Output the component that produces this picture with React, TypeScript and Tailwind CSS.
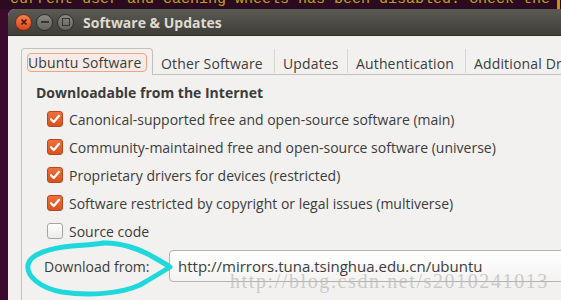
import React from "react";

const ui = { fontFamily: '"Open Sans", "Noto Sans", sans-serif' };

function Check({ on }: { on: boolean }) {
  if (!on) {
    return (
      <span className="w-[16px] h-[16px] rounded-[3px] border border-[#a8a6a2] bg-gradient-to-b from-[#ffffff] to-[#ecebe9] shrink-0" />
    );
  }
  return (
    <span className="w-[16px] h-[16px] rounded-[3px] border border-[#b9461b] bg-gradient-to-b from-[#f0703c] to-[#d9521d] flex items-center justify-center shrink-0">
      <svg width="12" height="12" viewBox="0 0 12 12">
        <path d="M2 6.2 L4.8 9 L10 2.8" fill="none" stroke="#ffffff" strokeWidth="2.2" strokeLinecap="round" strokeLinejoin="round" />
      </svg>
    </span>
  );
}

const sources = [
  { label: "Canonical-supported free and open-source software (main)", on: true },
  { label: "Community-maintained free and open-source software (universe)", on: true },
  { label: "Proprietary drivers for devices (restricted)", on: true },
  { label: "Software restricted by copyright or legal issues (multiverse)", on: true },
  { label: "Source code", on: false },
];

export default function App() {
  return (
    <div className="relative w-[561px] h-[300px] overflow-hidden bg-[#3a0b2c]">
      {/* terminal behind the window */}
      <div className="h-[9px] overflow-hidden bg-[#2c0a20] pl-[10px] flex">
        <div
          className="text-[15px] leading-[15px] mt-[-8px] text-[#c2a014] whitespace-pre"
          style={{ fontFamily: '"Liberation Mono", monospace' }}
        >
          current user and caching wheels has been disabled. Check the
        </div>
        <span className="ml-auto mr-[1px] w-[3px] h-[9px] bg-[#d08a10]" />
      </div>

      {/* window */}
      <div className="ml-[8px] h-[291px] rounded-tl-[7px] overflow-hidden bg-[#f2f1f0] flex flex-col" style={ui}>
        {/* title bar */}
        <div className="h-[27px] shrink-0 bg-gradient-to-b from-[#5c5a54] to-[#3e3d39] flex items-center pl-[7px] border-b border-[#2f2e2b]">
          <div className="flex items-center gap-[3px]">
            <span className="w-[17px] h-[17px] rounded-full border border-[#7a2a0c] bg-gradient-to-b from-[#f4804e] to-[#d9461a] flex items-center justify-center">
              <svg width="8" height="8" viewBox="0 0 8 8">
                <path d="M1.5 1.5 L6.5 6.5 M6.5 1.5 L1.5 6.5" stroke="#4a1808" strokeWidth="1.6" />
              </svg>
            </span>
            <span className="w-[17px] h-[17px] ml-[1px] rounded-full border border-[#2e2d2a] bg-gradient-to-b from-[#8a8882] to-[#65635e] flex items-center justify-center">
              <span className="w-[8px] h-[2px] bg-[#36352f]" />
            </span>
            <span className="w-[17px] h-[17px] ml-[1px] rounded-full border border-[#2e2d2a] bg-gradient-to-b from-[#8a8882] to-[#65635e] flex items-center justify-center">
              <span className="w-[8px] h-[8px] border-[1.5px] border-[#36352f]" />
            </span>
          </div>
          <span className="ml-[9px] text-[14px] font-bold text-[#dfdbd2]">Software &amp; Updates</span>
        </div>

        {/* body */}
        <div className="flex-1 pl-[13px] pt-[12px]">
          {/* tabs */}
          <div className="flex h-[27px] text-[14px] text-[#3c3c3c] tracking-[0.15px]">
            <div className="w-[132px] h-[27px] shrink-0 border border-b-0 border-[#c4c1bd] rounded-t-[4px] bg-[#f2f1f0] px-[5px] pt-[4px]">
              <div className="h-[19px] rounded-[4px] border border-[#f0a582] bg-[#f6ebe6] flex items-center leading-none">
                Ubuntu Software
              </div>
            </div>
            <div className="flex-1 flex border-b border-[#c4c1bd]">
              <div className="w-[122px] shrink-0 flex items-center pl-[8px] pt-[4px] border-r border-[#d8d5d1] my-[1px]">Other Software</div>
              <div className="w-[73px] shrink-0 flex items-center pl-[8px] pt-[4px] border-r border-[#d8d5d1] my-[1px]">Updates</div>
              <div className="w-[118px] shrink-0 flex items-center pl-[8px] pt-[4px] border-r border-[#d8d5d1] my-[1px]">Authentication</div>
              <div className="flex-1 flex items-center pl-[8px] pt-[4px] whitespace-nowrap overflow-hidden">Additional Drivers</div>
            </div>
          </div>

          {/* notebook page */}
          <div className="border-l border-[#c4c1bd] h-[240px] pl-[14px] pt-[8px] text-[#3c3c3c]">
            <div className="text-[14px] font-bold leading-[20px]">Downloadable from the Internet</div>
            <div className="mt-[2px] pl-[11px] flex flex-col">
              {sources.map((s) => (
                <div key={s.label} className="h-[28px] flex items-center gap-[6px] text-[14px] whitespace-nowrap">
                  <Check on={s.on} />
                  <span>{s.label}</span>
                </div>
              ))}
            </div>
            <div className="mt-[5px] flex items-center pl-[8px] text-[14px]">
              <span className="w-[125px] shrink-0">Download from:</span>
              <div className="h-[32px] flex-1 -mr-[20px] rounded-[4px] border border-[#b4b2ae] bg-gradient-to-b from-[#ffffff] to-[#f4f3f2] flex items-center pl-[8px] whitespace-nowrap text-[15px]">
                http://mirrors.tuna.tsinghua.edu.cn/ubuntu
              </div>
            </div>
          </div>
        </div>
      </div>

      {/* hand-drawn cyan circle */}
      <svg className="absolute left-0 top-0 pointer-events-none" width="561" height="300" viewBox="0 0 561 300">
        <path
          d="M102 243 C120 242 140 249 155 258 C162 262 167 265 170 267 C162 272 152 278 140 285 C120 294 88 296 62 292 C40 288 26 276 28 265 C30 254 50 248 72 246 C86 245 96 244 105 243"
          fill="none"
          stroke="#1ed8dc"
          strokeWidth="5"
          strokeLinecap="round"
          strokeLinejoin="round"
        />
      </svg>

      {/* watermark */}
      <div
        className="absolute left-[230px] top-[271px] text-[20px] leading-[20px] text-[#bdbcba] opacity-75 whitespace-nowrap tracking-[1.6px] pointer-events-none"
        style={{ fontFamily: '"Liberation Serif", serif' }}
      >
        http://blog.csdn.net/s2010241013
      </div>
    </div>
  );
}
